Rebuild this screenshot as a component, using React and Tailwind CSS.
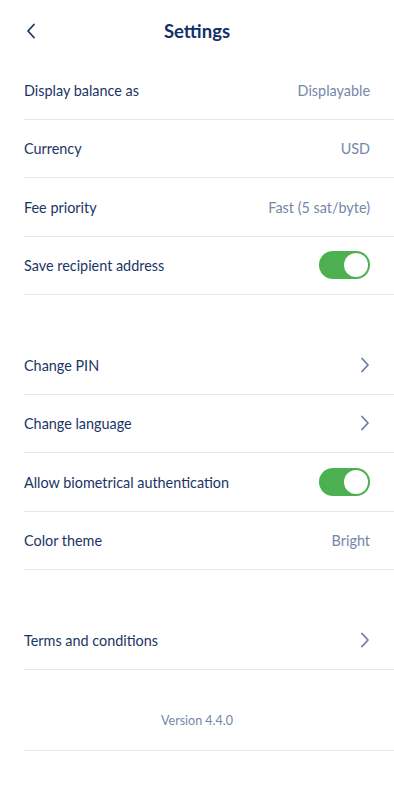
import React, { useState } from "react";

const LABEL = "text-[14.4px] text-[#1b3566] pt-[2px]";
const VALUE = "text-[14.4px] text-[#7587a8] pt-[2px]";

function Chevron() {
  return (
    <svg width="10" height="16" viewBox="0 0 10 16" fill="none" aria-hidden="true">
      <path d="M2 1.5L8 8L2 14.5" stroke="#6c7ea3" strokeWidth="1.8" strokeLinecap="round" strokeLinejoin="round" />
    </svg>
  );
}

function Toggle({ on, onChange }) {
  return (
    <button
      onClick={() => onChange(!on)}
      className={`w-[51px] h-[28px] rounded-full p-[2px] flex items-center ${on ? "bg-[#4caf50] justify-end" : "bg-gray-300 justify-start"}`}
    >
      <span className="w-[24px] h-[24px] rounded-full bg-white block" />
    </button>
  );
}

function Row({ label, children }) {
  return (
    <div className="h-[58.5px] ml-6 pr-6 flex items-center justify-between border-b border-[#e3e6ee]">
      <span className={LABEL}>{label}</span>
      {children}
    </div>
  );
}

export default function App() {
  const [saveAddr, setSaveAddr] = useState(true);
  const [bio, setBio] = useState(true);

  return (
    <div className="w-[394px] min-h-[800px] bg-white" style={{ fontFamily: "Lato, 'Open Sans', sans-serif" }}>
      {/* header */}
      <div className="h-[61px] relative flex items-center justify-center">
        <button className="absolute left-[22px] top-[19px] p-1">
          <svg width="10" height="16" viewBox="0 0 10 16" fill="none" aria-hidden="true">
            <path d="M8 1.5L2 8L8 14.5" stroke="#1b3566" strokeWidth="1.8" strokeLinecap="round" strokeLinejoin="round" />
          </svg>
        </button>
        <h1 className="text-[18.5px] font-bold text-[#13306a] mt-[2px]">Settings</h1>
      </div>

      <Row label="Display balance as"><span className={VALUE}>Displayable</span></Row>
      <Row label="Currency"><span className={VALUE}>USD</span></Row>
      <Row label="Fee priority"><span className={VALUE}>Fast (5 sat/byte)</span></Row>
      <Row label="Save recipient address"><Toggle on={saveAddr} onChange={setSaveAddr} /></Row>

      <div className="h-[41px]" />

      <Row label="Change PIN"><Chevron /></Row>
      <Row label="Change language"><Chevron /></Row>
      <Row label="Allow biometrical authentication"><Toggle on={bio} onChange={setBio} /></Row>
      <Row label="Color theme"><span className={VALUE}>Bright</span></Row>

      <div className="h-[41px]" />

      <Row label="Terms and conditions"><Chevron /></Row>

      <div className="ml-6 h-[81px] pt-[42px] flex justify-center border-b border-[#e3e6ee]">
        <span className="text-[12.5px] text-[#7587a8] pr-6">Version 4.4.0</span>
      </div>
    </div>
  );
}
